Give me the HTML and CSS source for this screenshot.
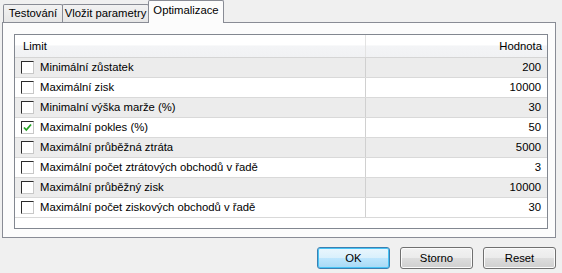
FILE: index.html
```html
<!DOCTYPE html>
<html lang="cs">
<head>
    <meta charset="UTF-8">
    <title>Optimalizace</title>
    <link rel="stylesheet" href="styles.css">
</head>
<body>
  <div class="window">
    <div class="tabs">
      <div class="tab tab-first">Testování</div>
      <div class="tab tab-second">Vložit parametry</div>
      <div class="tab tab-active">Optimalizace</div>
    </div>

    <div class="panel">
      <div class="list">
        <div class="list-header">
          <div class="col-name">Limit</div>
          <div class="col-value">Hodnota</div>
        </div>

        <div class="row alt">
          <div class="col-name"><span class="check"></span>Minimální zůstatek</div>
          <div class="col-value">200</div>
        </div>
        <div class="row">
          <div class="col-name"><span class="check"></span>Maximální zisk</div>
          <div class="col-value">10000</div>
        </div>
        <div class="row alt">
          <div class="col-name"><span class="check"></span>Minimalní výška marže (%)</div>
          <div class="col-value">30</div>
        </div>
        <div class="row">
          <div class="col-name">
            <span class="check checked">
              <svg width="9" height="9" viewBox="0 0 9 9"><path d="M1 4.5 L3.3 7 L8 1.5" fill="none" stroke="#21a121" stroke-width="1.8"/></svg>
            </span>Maximalní pokles (%)
          </div>
          <div class="col-value">50</div>
        </div>
        <div class="row alt">
          <div class="col-name"><span class="check"></span>Maximální průběžná ztráta</div>
          <div class="col-value">5000</div>
        </div>
        <div class="row">
          <div class="col-name"><span class="check"></span>Maximální počet ztrátových obchodů v řadě</div>
          <div class="col-value">3</div>
        </div>
        <div class="row alt">
          <div class="col-name"><span class="check"></span>Maximální průběžný zisk</div>
          <div class="col-value">10000</div>
        </div>
        <div class="row">
          <div class="col-name"><span class="check"></span>Maximální počet ziskových obchodů v řadě</div>
          <div class="col-value">30</div>
        </div>
      </div>
    </div>

    <div class="buttons">
      <button class="btn btn-default">OK</button>
      <button class="btn">Storno</button>
      <button class="btn">Reset</button>
    </div>
  </div>
</body>
</html>
```

FILE: styles.css
```css
body {
  margin: 0;
  background-color: #f0f0f0;
  font-family: "Liberation Sans", Arial, sans-serif;
  font-size: 11.3px;
  color: #000;
}

.window {
  width: 562px;
  height: 273px;
}

/* tabs */
.tabs {
  display: flex;
  align-items: flex-end;
  height: 22px;
  padding-left: 3px;
}

.tab {
  box-sizing: border-box;
  height: 18px;
  line-height: 17px;
  text-align: center;
  white-space: nowrap;
  border: 1px solid #898c95;
  border-bottom: none;
  background: linear-gradient(#f2f2f2, #e6e6e6);
  border-radius: 2px 2px 0 0;
}

.tab-first {
  width: 60px;
}

.tab-second {
  width: 87px;
  margin-left: -1px;
}

.tab-active {
  position: relative;
  z-index: 1;
  width: 76px;
  height: 23px;
  margin-left: -1px;
  margin-bottom: -1px;
  line-height: 19px;
  background: #fcfcfc;
}

/* panel */
.panel {
  box-sizing: border-box;
  width: 554px;
  height: 216px;
  margin-left: 2px;
  padding: 11px 7px 0 11px;
  border: 1px solid #898c95;
  background-color: #fcfcfc;
}

.list {
  box-sizing: border-box;
  height: 195px;
  border: 1px solid #828790;
  background-color: #fff;
}

.list-header,
.row {
  display: flex;
  box-sizing: border-box;
}

.list-header {
  height: 23px;
  line-height: 22px;
  background: linear-gradient(#ffffff 0, #ffffff 45%, #f3f4f6 50%, #f1f2f4 100%);
  border-bottom: 1px solid #d5d5d5;
}

.row {
  height: 20px;
  line-height: 19px;
  border-bottom: 1px solid #d9d9d9;
}

.row.alt {
  background-color: #ececec;
}

.col-name {
  display: flex;
  align-items: center;
  box-sizing: border-box;
  width: 351px;
  padding-left: 6px;
  border-right: 1px solid #d0d0d0;
  white-space: nowrap;
}

.list-header .col-name {
  padding-left: 8px;
  border-right-color: #e3e3e3;
}

.col-value {
  flex: 1;
  text-align: right;
  padding-right: 6px;
}

.list-header .col-value {
  padding-right: 5px;
}

.check {
  display: inline-flex;
  align-items: center;
  justify-content: center;
  box-sizing: border-box;
  width: 13px;
  height: 13px;
  margin-right: 6px;
  border: 1px solid #2b2b2b;
  border-right-color: #c8c8c8;
  border-bottom-color: #c8c8c8;
  background-color: #fff;
}

/* buttons */
.buttons {
  display: flex;
  justify-content: flex-end;
  gap: 10px;
  padding: 9px 6px 0 0;
}

.btn {
  width: 73px;
  height: 22px;
  padding: 0;
  font-family: "Liberation Sans", Arial, sans-serif;
  font-size: 11.3px;
  color: #000;
  border: 1px solid #707070;
  border-radius: 3px;
  background: linear-gradient(#f2f2f2 0, #ebebeb 50%, #dddddd 51%, #cfcfcf 100%);
  box-shadow: inset 0 0 0 1px #fbfbfb;
}

.btn-default {
  border-color: #3c7fb1;
  background: linear-gradient(#eaf6fd 0, #d9f0fc 50%, #bee6fd 51%, #a7d9f5 100%);
  box-shadow: inset 0 0 0 1px #48c4f5;
}
```
